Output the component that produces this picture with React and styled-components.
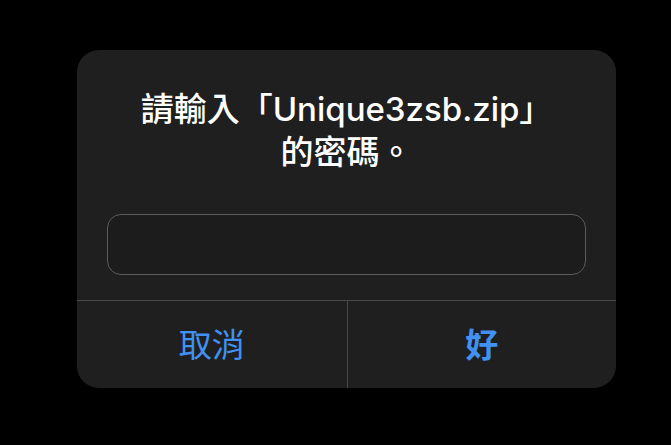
import styled, { createGlobalStyle } from 'styled-components'

const GlobalStyle = createGlobalStyle`
  html, body {
    margin: 0;
    padding: 0;
    background: #000;
  }
  body {
    font-family: "Inter", "Noto Sans CJK TC", sans-serif;
  }
`

const Page = styled.div`
  width: 671px;
  height: 445px;
  background: #000;
  padding: 50px 0 0 77px;
  box-sizing: border-box;
`

const Dialog = styled.div`
  width: 539px;
  height: 338px;
  background: #1f1f1f;
  border-radius: 22px;
  display: flex;
  flex-direction: column;
  overflow: hidden;
`

const Body = styled.div`
  padding: 38px 30px 25px;
  display: flex;
  flex-direction: column;
  align-items: center;
`

const Title = styled.div`
  color: #fff;
  font-size: 33px;
  font-weight: 500;
  line-height: 43px;
  text-align: center;
  white-space: nowrap;
`

const Input = styled.input`
  margin-top: 40px;
  width: 100%;
  height: 61px;
  box-sizing: border-box;
  background: #1c1c1d;
  border: 1px solid #5c5c5e;
  border-radius: 14px;
  outline: none;
  color: #fff;
  font-size: 24px;
  padding: 0 14px;
`

const Actions = styled.div`
  flex: 1;
  display: grid;
  grid-template-columns: 1fr 1fr;
  border-top: 1px solid #4a4a4c;
`

const Action = styled.button`
  background: transparent;
  border: none;
  border-left: ${p => (p.$divider ? '1px solid #4a4a4c' : 'none')};
  color: #4191f2;
  font-family: inherit;
  font-size: 33px;
  font-weight: ${p => (p.$primary ? 600 : 400)};
  cursor: pointer;
  padding: 0 0 4px;
`

export default function App() {
  return (
    <>
      <GlobalStyle />
      <Page>
        <Dialog>
          <Body>
            <Title>
              請輸入「Unique3zsb.zip」
              <br />
              的密碼。
            </Title>
            <Input type="password" />
          </Body>
          <Actions>
            <Action>取消</Action>
            <Action $divider $primary>好</Action>
          </Actions>
        </Dialog>
      </Page>
    </>
  )
}
